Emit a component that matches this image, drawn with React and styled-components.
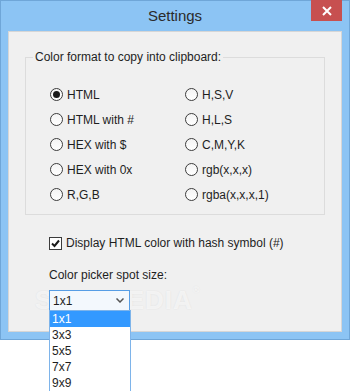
import React from "react";
import styled, { createGlobalStyle } from "styled-components";

const GlobalStyle = createGlobalStyle`
    html, body {
        margin: 0;
        min-height: 391px;
        background: #ffffff;
        font-family: "Liberation Sans", Arial, sans-serif;
    }
`;

const Page = styled.div`
    height: 391px;
`;

const Window = styled.div`
    position: relative;
    box-sizing: border-box;
    width: 350px;
    height: 340px;
    background: #8cc4f4;
    border: 1px solid #6fa6d8;
    display: flex;
    flex-direction: column;
`;

const TitleBar = styled.div`
    height: 30px;
    display: grid;
    grid-template-columns: 1fr auto 1fr;
    align-items: start;
`;

const Title = styled.div`
    grid-column: 2;
    font-size: 15px;
    line-height: 30px;
    color: #2b2b2b;
`;

const CloseButton = styled.div`
    grid-column: 3;
    justify-self: end;
    margin-right: 7px;
    margin-top: -1px;
    width: 31px;
    height: 21px;
    background: #c75050;
    display: flex;
    align-items: center;
    justify-content: center;
`;

const Client = styled.div`
    flex: 1;
    margin: 0 7px 7px;
    background: #f0f0f0;
    border: 1px solid #d6d6d6;
    padding: 17px 16px 0;
    font-size: 12px;
    color: #1e1e1e;
`;

const Group = styled.fieldset`
    margin: 0;
    width: 300px;
    box-sizing: border-box;
    border: 1px solid #dcdcdc;
    padding: 17px 0 7px 24px;
`;

const Legend = styled.legend`
    padding: 0 2px;
    margin-left: -17px;
    line-height: 16px;
`;

const RadioGrid = styled.div`
    display: grid;
    grid-template-columns: 135px 1fr;
    grid-auto-flow: column;
    grid-template-rows: repeat(5, 25px);
`;

const Option = styled.div`
    display: flex;
    align-items: center;
    gap: 4px;
`;

const RadioDot = styled.span`
    box-sizing: border-box;
    width: 13px;
    height: 13px;
    border-radius: 50%;
    border: 1px solid #3c3c3c;
    background: linear-gradient(#f4f4f4, #ffffff);
    display: flex;
    align-items: center;
    justify-content: center;
    &::after {
        content: "";
        width: 7px;
        height: 7px;
        border-radius: 50%;
        background: ${(p) => (p.checked ? "#1a1a1a" : "transparent")};
    }
`;

const CheckRow = styled(Option)`
    margin: 20px 0 0 24px;
    height: 16px;
`;

const CheckBox = styled.span`
    box-sizing: border-box;
    width: 13px;
    height: 13px;
    border: 1px solid #3c3c3c;
    background: #ffffff;
    display: flex;
    align-items: center;
    justify-content: center;
`;

const FieldLabel = styled.div`
    margin: 16px 0 0 24px;
    line-height: 16px;
`;

const ComboWrap = styled.div`
    position: relative;
    margin: 7px 0 0 24px;
    width: 81px;
`;

const Combo = styled.div`
    box-sizing: border-box;
    height: 21px;
    border: 1px solid #569de5;
    background: #f3f8fd;
    display: flex;
    align-items: center;
    justify-content: space-between;
    padding: 0 5px 0 3px;
    color: #1e1e1e;
    position: relative;
    z-index: 2;
`;

const DropList = styled.ul`
    position: absolute;
    z-index: 3;
    top: 20px;
    left: 0;
    box-sizing: border-box;
    width: 82px;
    margin: 0;
    padding: 0;
    list-style: none;
    background: #ffffff;
    border: 1px solid #7eb4ea;
`;

const DropItem = styled.li`
    height: 16px;
    line-height: 16px;
    padding-left: 2px;
    background: ${(p) => (p.selected ? "#3399ff" : "transparent")};
    color: ${(p) => (p.selected ? "#ffffff" : "#1e1e1e")};
`;

const Watermark = styled.div`
    position: absolute;
    left: 34px;
    top: 284px;
    font-family: "Liberation Sans", Arial, sans-serif;
    font-weight: bold;
    font-size: 26px;
    letter-spacing: 1px;
    color: rgba(255, 255, 255, 0.6);
    text-shadow: 0 0 2px rgba(0, 0, 0, 0.07);
    pointer-events: none;
    z-index: 1;
    sup {
        font-size: 9px;
        vertical-align: top;
    }
`;

const formats = [
    ["HTML", true],
    ["HTML with #"],
    ["HEX with $"],
    ["HEX with 0x"],
    ["R,G,B"],
    ["H,S,V"],
    ["H,L,S"],
    ["C,M,Y,K"],
    ["rgb(x,x,x)"],
    ["rgba(x,x,x,1)"],
];

const sizes = ["1x1", "3x3", "5x5", "7x7", "9x9"];

export default function App() {
    return (
        <Page>
            <GlobalStyle />
            <Window>
                <TitleBar>
                    <Title>Settings</Title>
                    <CloseButton>
                        <svg width="10" height="10" viewBox="0 0 10 10">
                            <path d="M1 1 L9 9 M9 1 L1 9" stroke="#fff" strokeWidth="2" />
                        </svg>
                    </CloseButton>
                </TitleBar>
                <Client>
                    <Group>
                        <Legend>Color format to copy into clipboard:</Legend>
                        <RadioGrid>
                            {formats.map(([label, checked]) => (
                                <Option key={label}>
                                    <RadioDot checked={checked} />
                                    <span>{label}</span>
                                </Option>
                            ))}
                        </RadioGrid>
                    </Group>
                    <CheckRow>
                        <CheckBox>
                            <svg width="11" height="11" viewBox="0 0 11 11">
                                <path d="M2 5.5 L4.5 8 L9 2.5" fill="none" stroke="#1a1a1a" strokeWidth="2" />
                            </svg>
                        </CheckBox>
                        <span>Display HTML color with hash symbol (#)</span>
                    </CheckRow>
                    <FieldLabel>Color picker spot size:</FieldLabel>
                    <ComboWrap>
                        <Combo>
                            <span>1x1</span>
                            <svg width="8" height="5" viewBox="0 0 8 5">
                                <path d="M0.5 0.5 L4 4 L7.5 0.5" fill="none" stroke="#555" strokeWidth="1.5" />
                            </svg>
                        </Combo>
                        <DropList>
                            {sizes.map((s, i) => (
                                <DropItem key={s} selected={i === 0}>
                                    {s}
                                </DropItem>
                            ))}
                        </DropList>
                    </ComboWrap>
                </Client>
                <Watermark>
                    SOFTPEDIA<sup>®</sup>
                </Watermark>
            </Window>
        </Page>
    );
}
